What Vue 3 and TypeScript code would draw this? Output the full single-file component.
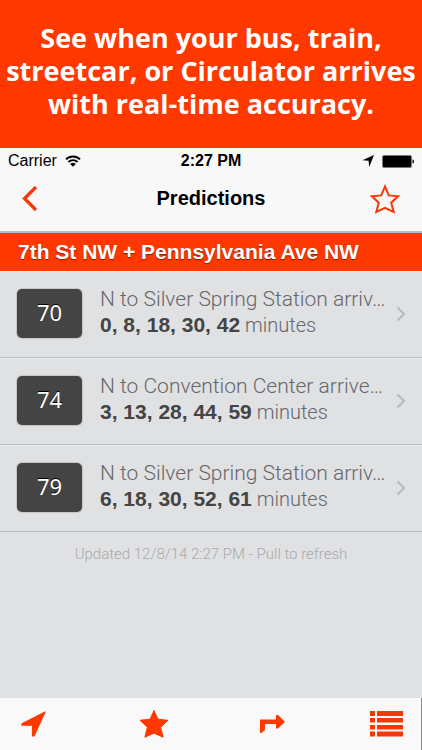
<script setup lang="ts">
import { ref } from 'vue'

interface Prediction {
  route: string
  summary: string
  times: number[]
}

const stop = '7th St NW + Pennsylvania Ave NW'
const predictions = ref<Prediction[]>([
  { route: '70', summary: 'N to Silver Spring Station arriv…', times: [0, 8, 18, 30, 42] },
  { route: '74', summary: 'N to Convention Center arrive…', times: [3, 13, 28, 44, 59] },
  { route: '79', summary: 'N to Silver Spring Station arriv…', times: [6, 18, 30, 52, 61] },
])
</script>

<template>
  <div class="page">
    <h1 class="promo">See when your bus, train,<br />streetcar, or Circulator arrives<br />with real-time accuracy.</h1>

    <header class="top">
      <div class="status">
        <span class="carrier">
          Carrier
          <svg width="16" height="12" viewBox="0 0 16 12" aria-hidden="true">
            <path d="M1 4.4a10 10 0 0 1 14 0M3.4 7a6.6 6.6 0 0 1 9.2 0" fill="none" stroke="#000" stroke-width="1.9" />
            <path d="M8 11.8 5.2 9a4 4 0 0 1 5.6 0z" />
          </svg>
        </span>
        <span class="clock">2:27 PM</span>
        <span class="power">
          <svg width="12" height="12" viewBox="0 0 12 12" aria-hidden="true">
            <path d="M12 0 7.2 12 6.6 5.800.4 5.300z" />
          </svg>
          <svg width="32" height="13" viewBox="0 0 32 13" aria-hidden="true">
            <rect x=".5" y=".5" width="29" height="12" rx="1.5" fill="#000" stroke="#777" />
            <path d="M30.5 4.3q1.5.5 1.5 2.2t-1.5 2.2z" />
          </svg>
        </span>
      </div>
      <nav class="nav">
        <button type="button" class="icon" aria-label="Back">
          <svg width="16" height="27" viewBox="0 0 16 27">
            <path d="M14 2 2.5 13.5 14 25" fill="none" stroke="#f5380b" stroke-width="3.2" />
          </svg>
        </button>
        <h2 class="title">Predictions</h2>
        <button type="button" class="icon end" aria-label="Add to favorites">
          <svg width="30" height="30" viewBox="0 0 30 30">
            <path d="m15 2.5 3.8 8.9 9.4.9-7 6.4 2.5 9.3-8.7-4.2L6.3 28l2.5-9.3-7-6.400 9.400-.9z" fill="none" stroke="#f5380b" stroke-width="2" />
          </svg>
        </button>
      </nav>
    </header>

    <main class="content">
      <h3 class="stop">{{ stop }}</h3>
      <ul class="list">
        <li v-for="p in predictions" :key="p.route">
          <a href="#" class="row">
            <span class="badge">{{ p.route }}</span>
            <span class="details">
              <span class="line">{{ p.summary }}</span>
              <span class="line times"><b>{{ p.times.join(', ') }}</b> minutes</span>
            </span>
            <svg class="chevron" width="10" height="16" viewBox="0 0 10 16" aria-hidden="true">
              <path d="m1.5 1.5 6.5 6.5-6.5 6.5" fill="none" stroke="#b9babc" stroke-width="2" />
            </svg>
          </a>
        </li>
      </ul>
      <p class="updated">Updated 12/8/14 2:27 PM - Pull to refresh</p>
    </main>

    <footer class="tabs">
      <button type="button" class="icon" aria-label="Nearby">
        <svg width="25" height="26" viewBox="0 0 25 26">
          <path d="M24 1 13 25h-1.5V14.2H1V12.8z" fill="#ff3800" stroke="#ff3800" stroke-width="1.2" stroke-linejoin="round" />
        </svg>
      </button>
      <button type="button" class="icon" aria-label="Favorites">
        <svg width="30" height="30" viewBox="0 0 30 30">
          <path d="m15 1.500 4 8.700 10 1.100-7.400 6.900 2.500 10L15 24.200 5.900 28.200l2.500-10L1 11.300l10-1.100z" fill="#ff3800" stroke="#ff3800" stroke-linejoin="round" />
        </svg>
      </button>
      <button type="button" class="icon" aria-label="Directions">
        <svg width="25" height="20" viewBox="0 0 25 20">
          <path d="M0 5.500h16V1h2l7 6.800-7 6.700h-2V10H5v6l-3.500 3H0z" fill="#ff3800" />
        </svg>
      </button>
      <button type="button" class="icon" aria-label="Routes">
        <svg width="33" height="26" viewBox="0 0 33 26">
          <path d="M0 0h5v5H0zM7 0h26v5H7zM0 7h5v4.500H0zM7 7h26v4.500H7zM0 14h5v4.500H0zM7 14h26v4.500H7zM0 20.500h5v5H0zM7 20.500h26v5H7z" fill="#f5380b" />
        </svg>
      </button>
    </footer>
  </div>
</template>

<style>
body {
  margin: 0;
}
</style>

<style scoped>
.page {
  display: flex;
  flex-direction: column;
  min-height: 100vh;
  background: #e0e1e3;
  color: #000;
  font-family: "Liberation Sans", Arial, sans-serif;
}

h1,
h2,
h3,
p,
ul {
  margin: 0;
  padding: 0;
}

svg {
  display: block;
}

.promo {
  padding: 21px 0 28px;
  background: #ff3800;
  color: #fff;
  font: 700 27px/33px "Open Sans", "Noto Sans", sans-serif;
  text-align: center;
  white-space: nowrap;
}

.top {
  background: #f8f8f8;
  border-bottom: 2px solid #bcbcbd;
}

.status {
  display: grid;
  grid-template-columns: 1fr auto 1fr;
  align-items: center;
  height: 26px;
  padding: 0 8px;
  font-size: 16px;
}

.carrier,
.power {
  display: flex;
  align-items: center;
  gap: 8px;
}

.power {
  justify-content: flex-end;
}

.clock {
  font-weight: 700;
}

.nav {
  display: grid;
  grid-template-columns: 1fr auto 1fr;
  align-items: center;
  height: 49px;
  padding: 0 22px 8px;
}

.title {
  font-size: 20px;
  font-weight: 700;
}

.icon {
  display: flex;
  padding: 0;
  border: 0;
  background: none;
  cursor: pointer;
}

.end {
  justify-content: flex-end;
}

.content {
  flex: 1;
}

.stop {
  padding: 0 18px;
  background: #ff3800;
  color: #fff;
  font-size: 21px;
  line-height: 38px;
  text-shadow: 0 1px 1px #7a2000;
}

.list {
  list-style: none;
}

.row {
  display: flex;
  align-items: center;
  box-sizing: border-box;
  height: 87px;
  padding: 0 16px 2px 17px;
  border-top: 1px solid #eeeff0;
  border-bottom: 1px solid #b9babc;
  color: #66676a;
  text-decoration: none;
}

.badge {
  width: 65px;
  padding-bottom: 2px;
  border-radius: 5px;
  background: #444;
  box-shadow: 0 0 1px 1px #c4c4c4;
  color: #fff;
  font: 22px/47px "Noto Sans", "Open Sans", sans-serif;
  text-align: center;
  text-shadow: 0 -1px 0 #000;
}

.details {
  flex: 1;
  min-width: 0;
  margin-left: 18px;
  padding-bottom: 4px;
}

.line {
  display: block;
  font-family: Roboto, "Liberation Sans", sans-serif;
  font-size: 21px;
  font-weight: 300;
  line-height: 26px;
  white-space: nowrap;
}

.times {
  font-size: 20px;
}

.line b {
  color: #444;
  font-family: "Liberation Sans", Arial, sans-serif;
  font-size: 21px;
  font-weight: 700;
}

.updated {
  color: #a9aaac;
  font-family: Roboto, "Liberation Sans", sans-serif;
  font-size: 15px;
  font-weight: 300;
  line-height: 44px;
  text-align: center;
}

.tabs {
  display: grid;
  grid-template-columns: 118fr 121fr 110fr 51fr;
  align-items: center;
  height: 52px;
  padding-left: 21px;
  border-right: 1px solid #8a8a8a;
  background: #f9f9f9;
}
</style>
